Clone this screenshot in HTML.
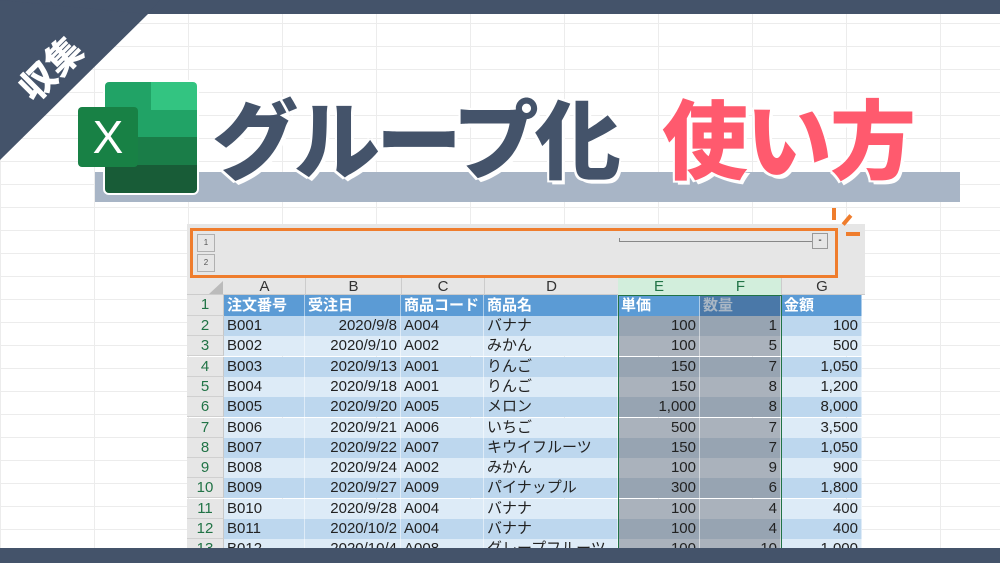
<!DOCTYPE html><html><head><meta charset="utf-8"><style>
*{margin:0;padding:0;box-sizing:border-box}
body{width:1000px;height:563px;overflow:hidden;position:relative;background:#fff;font-family:"Liberation Sans","Noto Sans CJK JP",sans-serif}
.abs{position:absolute}
.grid{position:absolute;left:0;top:0;width:1000px;height:563px;
background-image:linear-gradient(#ececec 1px,transparent 1px),linear-gradient(90deg,#ececec 1px,transparent 1px);
background-size:94px 23px;background-position:0 0,0 0}
.t{position:absolute;font-weight:900;font-size:86px;line-height:1;font-family:"Noto Sans CJK JP",sans-serif;
text-shadow:3px 4px 0 #fff,-2px -2px 0 #fff,2px -2px 0 #fff,-2px 2px 0 #fff}
.sh{position:absolute;left:187px;top:224px;width:678px;height:330px}
.row{position:absolute;left:0;height:20px;width:678px;font-size:15px;line-height:20px;color:#222}
.c{position:absolute;top:0;height:20px;padding:0 3px;white-space:nowrap;border-right:1px solid rgba(255,255,255,.5)}
.r{text-align:right}
.rh{background:#e6e6e6;color:#217346;text-align:center;font-size:15px;border-right:1px solid #c8c8c8;border-bottom:1px solid #d0d0d0}
</style></head><body>
<div class="grid"></div>
<div class="abs" style="left:0;top:0;width:1000px;height:14px;background:#44536a"></div>
<svg class="abs" style="left:0;top:0" width="160" height="170"><polygon points="0,0 148,14 0,160" fill="#44536a"/><polygon points="0,0 160,0 148,14" fill="#44536a"/>
<text x="60" y="78" fill="#fff" font-size="36" font-weight="900" font-family="Noto Sans CJK JP,sans-serif" transform="rotate(-45 60 78)" text-anchor="middle">収集</text></svg>
<div class="abs" style="left:95px;top:172px;width:865px;height:30px;background:#a8b5c6"></div>
<div class="abs" style="left:105px;top:82px;width:92px;height:111px;border-radius:4px;overflow:hidden;box-shadow:0 0 0 2px #fff">
<div class="abs" style="left:0;top:0;width:46px;height:28px;background:#21a366"></div>
<div class="abs" style="left:46px;top:0;width:46px;height:28px;background:#33c481"></div>
<div class="abs" style="left:0;top:28px;width:92px;height:27px;background:#21a366"></div>
<div class="abs" style="left:0;top:55px;width:92px;height:28px;background:#1a7d48"></div>
<div class="abs" style="left:0;top:83px;width:92px;height:28px;background:#185c37"></div>
</div>
<div class="abs" style="left:78px;top:107px;width:60px;height:60px;background:#188145;border-radius:4px;color:#fff;font-size:46px;line-height:60px;text-align:center;font-family:'Liberation Sans',sans-serif">X</div>
<div class="t" style="left:212px;top:92px;color:#44536a;letter-spacing:-4px">グループ化</div>
<div class="t" style="left:662px;top:92px;color:#ff5a6e;letter-spacing:-2px">使い方</div>
<div class="sh">
<div class="abs" style="left:0;top:0;width:678px;height:54px;background:#e6e6e6"></div>
<div class="abs" style="left:3px;top:4px;width:648px;height:50px;border:3px solid #ef7d2d"></div>
<div class="abs" style="left:10px;top:10px;width:18px;height:18px;border:1px solid #b0b0b0;font-size:8px;text-align:center;line-height:16px;color:#555">1</div>
<div class="abs" style="left:10px;top:30px;width:18px;height:18px;border:1px solid #b0b0b0;font-size:8px;text-align:center;line-height:16px;color:#555">2</div>
<div class="abs" style="left:432px;top:17px;width:194px;height:1px;background:#888"></div>
<div class="abs" style="left:432px;top:14px;width:1px;height:4px;background:#888"></div>
<div class="abs" style="left:625px;top:9px;width:16px;height:16px;border:1px solid #999;font-size:10px;text-align:center;line-height:13px">-</div>
<div class="abs" style="left:0;top:54px;width:678px;height:17px;background:#e6e6e6;font-size:15px;line-height:17px;color:#333;border-bottom:1px solid #ccc">
<span class="abs" style="left:37px;width:81px;text-align:center">A</span>
<span class="abs" style="left:118px;width:96px;text-align:center;border-left:1px solid #ccc">B</span>
<span class="abs" style="left:214px;width:83px;text-align:center;border-left:1px solid #ccc">C</span>
<span class="abs" style="left:297px;width:134px;text-align:center;border-left:1px solid #ccc">D</span>
<span class="abs" style="left:431px;width:82px;text-align:center;background:#d2eedc;color:#217346">E</span>
<span class="abs" style="left:513px;width:81px;text-align:center;background:#d2eedc;color:#217346">F</span>
<span class="abs" style="left:594px;width:81px;text-align:center;border-left:1px solid #ccc">G</span>
</div>
<svg class="abs" style="left:22px;top:57px" width="14" height="13"><polygon points="14,0 14,13 0,13" fill="#bbb"/></svg>
<div id="rows"></div>
<div class="abs" style="left:431px;top:71px;width:164px;height:260px;border:1.5px solid #217346"></div>
</div>
<div class="abs" style="left:832px;top:208px;width:4px;height:12px;background:#ef7d2d"></div>
<div class="abs" style="left:845px;top:214px;width:4px;height:12px;background:#ef7d2d;transform:rotate(40deg)"></div>
<div class="abs" style="left:846px;top:232px;width:14px;height:4px;background:#ef7d2d"></div>
<div class="abs" style="left:0;top:548px;width:1000px;height:15px;background:#44536a"></div>
<script>
(function(){
var d=[["B001","2020/9/8","A004","バナナ","100","1","100"],["B002","2020/9/10","A002","みかん","100","5","500"],["B003","2020/9/13","A001","りんご","150","7","1,050"],["B004","2020/9/18","A001","りんご","150","8","1,200"],["B005","2020/9/20","A005","メロン","1,000","8","8,000"],["B006","2020/9/21","A006","いちご","500","7","3,500"],["B007","2020/9/22","A007","キウイフルーツ","150","7","1,050"],["B008","2020/9/24","A002","みかん","100","9","900"],["B009","2020/9/27","A009","パイナップル","300","6","1,800"],["B010","2020/9/28","A004","バナナ","100","4","400"],["B011","2020/10/2","A004","バナナ","100","4","400"],["B012","2020/10/4","A008","グレープフルーツ","100","10","1,000"]];
var L=[37,118,214,297,431,513,594,675];
function cell(i,txt,bg,cls,st){return '<div class="c '+(cls||'')+'" style="left:'+L[i]+'px;width:'+(L[i+1]-L[i])+'px;background:'+bg+';'+(st||'')+'">'+txt+'</div>';}
var h='';var ty=71;
h+='<div class="row" style="top:'+ty+'px;height:21px"><div class="c rh" style="left:0;width:37px;height:21px">1</div>';
var hd=["注文番号","受注日","商品コード","商品名","単価","数量","金額"];
for(var i=0;i<7;i++)h+=cell(i,hd[i],i==5?'#4a78a8':'#5b9bd5','', 'color:'+(i==5?'#a9b6c4':'#fff')+';font-weight:bold;height:21px;line-height:21px');
h+='</div>';
for(var r=0;r<12;r++){var y=92+r*20.3;var odd=r%2==0;var bg=odd?'#bdd7ee':'#ddebf7';var gb=odd?'#97a4b2':'#aab2bc';
h+='<div class="row" style="top:'+y+'px"><div class="c rh" style="left:0;width:37px">'+(r+2)+'</div>';
for(var i=0;i<7;i++){var right=(i==1||i>=4);h+=cell(i,d[r][i],(i==4||i==5)?gb:bg,right?'r':'');}
h+='</div>';}
document.getElementById('rows').innerHTML=h;
})();
</script>
</body></html>
